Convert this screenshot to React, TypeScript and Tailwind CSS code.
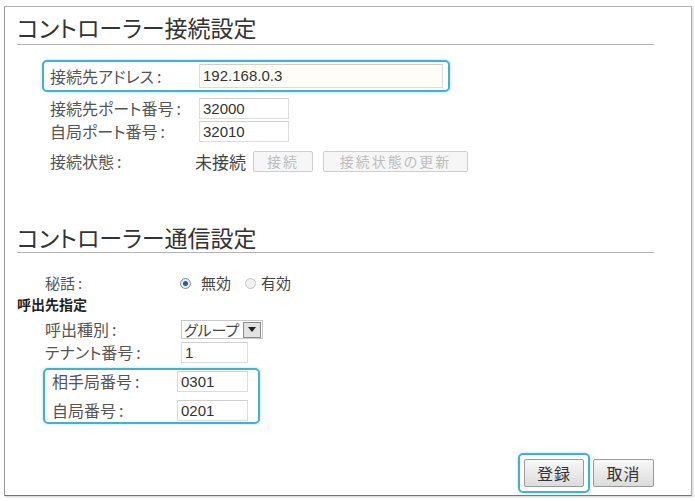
import React from 'react';

const jp = "font-['Noto_Sans_CJK_JP','Noto_Sans',sans-serif] [font-feature-settings:'palt']";
const num = "font-['Liberation_Sans','Noto_Sans_CJK_JP',sans-serif]";

const TextBox = ({ value, w, h = 'h-[21px]', bg = 'bg-white' }: { value: string; w: string; h?: string; bg?: string }) => (
  <div className={`${w} ${h} ${bg} border border-[#dcdcdc] border-t-[#cfcfcf] flex items-center pl-[3px] text-[15px] text-[#333] ${num}`}>
    {value}
  </div>
);

const Radio = ({ checked }: { checked?: boolean }) => (
  <span
    className={`w-[11px] h-[11px] rounded-full border flex items-center justify-center ${
      checked ? 'border-[#7d8fa6] bg-[#e8eef6]' : 'border-[#c4c4c4] bg-[#f2f2f2]'
    }`}
  >
    {checked && <span className="w-[5px] h-[5px] rounded-full bg-[#2e5c9a]" />}
  </span>
);

// ラベル + コロン
const Label = ({ text, w }: { text: string; w: string }) => (
  <span className={`${w} flex items-center`}>
    {text}
    <span className="ml-[3px]">:</span>
  </span>
);

const SectionTitle = ({ children, className = '' }: { children: React.ReactNode; className?: string }) => (
  <div className={`text-[23px] leading-[30px] text-[#333] border-b border-[#b4b4b4] ${className}`}>{children}</div>
);

export default function App() {
  return (
    <div className={`w-[695px] h-[501px] bg-white pt-[6px] pl-[4px] ${jp}`}>
      <div className="w-[688px] h-[490px] border border-[#b0b0b0] border-l-[#999] border-b-[#777] shadow-[1px_1px_2px_#ccc] flex flex-col pl-[12px] pr-[37px]">
        {/* 接続設定 */}
        <SectionTitle className="pt-[5px] pb-[2px]">コントローラー接続設定</SectionTitle>

        <div className="mt-[15px] ml-[25px] w-[408px] h-[32px] border-2 border-[#43b2c9] rounded-[5px] shadow-[0_0_3px_#a6dcea] flex items-center pl-[6px] text-[16px] text-[#555]">
          <Label text="接続先アドレス" w="w-[149px]" />
          <TextBox value="192.168.0.3" w="w-[244px]" h="h-[24px]" bg="bg-[#fffef6]" />
        </div>

        <div className="ml-[33px] mt-[6px] flex flex-col text-[16px] leading-[21px] text-[#555]">
          <div className="h-[21px] flex items-center">
            <Label text="接続先ポート番号" w="w-[149px]" />
            <TextBox value="32000" w="w-[90px]" />
          </div>
          <div className="h-[21px] mt-[2px] flex items-center">
            <Label text="自局ポート番号" w="w-[149px]" />
            <TextBox value="32010" w="w-[90px]" />
          </div>
          <div className="h-[21px] mt-[9px] flex items-center">
            <Label text="接続状態" w="w-[145px]" />
            <span className="text-[#444] text-[17px]">未接続</span>
            <span className="ml-[7px] w-[60px] h-[21px] border border-[#cfcfcf] rounded-[2px] bg-[#f6f6f6] flex items-center justify-center text-[14px] text-[#bdbdbd] tracking-[2px]">
              接続
            </span>
            <span className="ml-[10px] w-[145px] h-[21px] border border-[#cfcfcf] rounded-[2px] bg-[#f6f6f6] flex items-center justify-center text-[14px] text-[#bdbdbd] tracking-[2px]">
              接続状態の更新
            </span>
          </div>
        </div>

        {/* 通信設定 */}
        <SectionTitle className="mt-[50px]">コントローラー通信設定</SectionTitle>

        <div className="mt-[19px] flex flex-col text-[16px] text-[#555]">
          <div className="h-[22px] ml-[28px] flex items-center text-[15px] leading-[22px]">
            <Label text="秘話" w="w-[135px]" />
            <Radio checked />
            <span className="ml-[10px] text-[#444]">無効</span>
            <span className="ml-[14px]">
              <Radio />
            </span>
            <span className="ml-[5px] text-[#444]">有効</span>
          </div>
          <div className="h-[20px] flex items-center font-bold text-[#222] text-[14px] leading-[20px]">呼出先指定</div>
          <div className="h-[19px] mt-[6px] ml-[28px] flex items-center leading-[19px]">
            <Label text="呼出種別" w="w-[136px]" />
            <div className="h-[19px] flex items-center border border-[#c8c8c8]">
              <span className="w-[61px] pl-[2px] text-[15px] text-[#444] leading-[17px]">グループ</span>
              <span className="w-[18px] h-[16px] mr-[1px] border border-[#8a8a8a] bg-[#e2e2e2] flex items-center justify-center">
                <svg width="8" height="5" viewBox="0 0 8 5">
                  <path d="M0 0h8L4 5z" fill="#222" />
                </svg>
              </span>
            </div>
          </div>
          <div className="h-[21px] mt-[3px] ml-[28px] flex items-center leading-[21px]">
            <Label text="テナント番号" w="w-[136px]" />
            <TextBox value="1" w="w-[67px]" />
          </div>

          <div className="mt-[5px] ml-[26px] w-[217px] h-[56px] border-2 border-[#43b2c9] rounded-[5px] shadow-[0_0_3px_#a6dcea] flex flex-col pl-[7px] pt-[1px] gap-[8px] leading-[21px]">
            <div className="h-[21px] flex items-center">
              <Label text="相手局番号" w="w-[125px]" />
              <TextBox value="0301" w="w-[71px]" />
            </div>
            <div className="h-[21px] flex items-center">
              <Label text="自局番号" w="w-[125px]" />
              <TextBox value="0201" w="w-[71px]" />
            </div>
          </div>
        </div>

        {/* ボタン */}
        <div className="mt-auto mb-[2px] flex justify-end items-center gap-[3px]">
          <div className="w-[72px] h-[40px] border-2 border-[#43b2c9] rounded-[5px] shadow-[0_0_3px_#a6dcea] flex items-center justify-center">
            <span className="w-[60px] h-[28px] border border-[#9a9a9a] rounded-[2px] bg-gradient-to-b from-[#f8f8f8] to-[#dcdcdc] flex items-center justify-center text-[16px] text-[#333] tracking-[1px]">
              登録
            </span>
          </div>
          <span className="w-[61px] h-[28px] border border-[#9a9a9a] rounded-[2px] bg-gradient-to-b from-[#f8f8f8] to-[#dcdcdc] flex items-center justify-center text-[16px] text-[#333] tracking-[1px]">
            取消
          </span>
        </div>
      </div>
    </div>
  );
}
